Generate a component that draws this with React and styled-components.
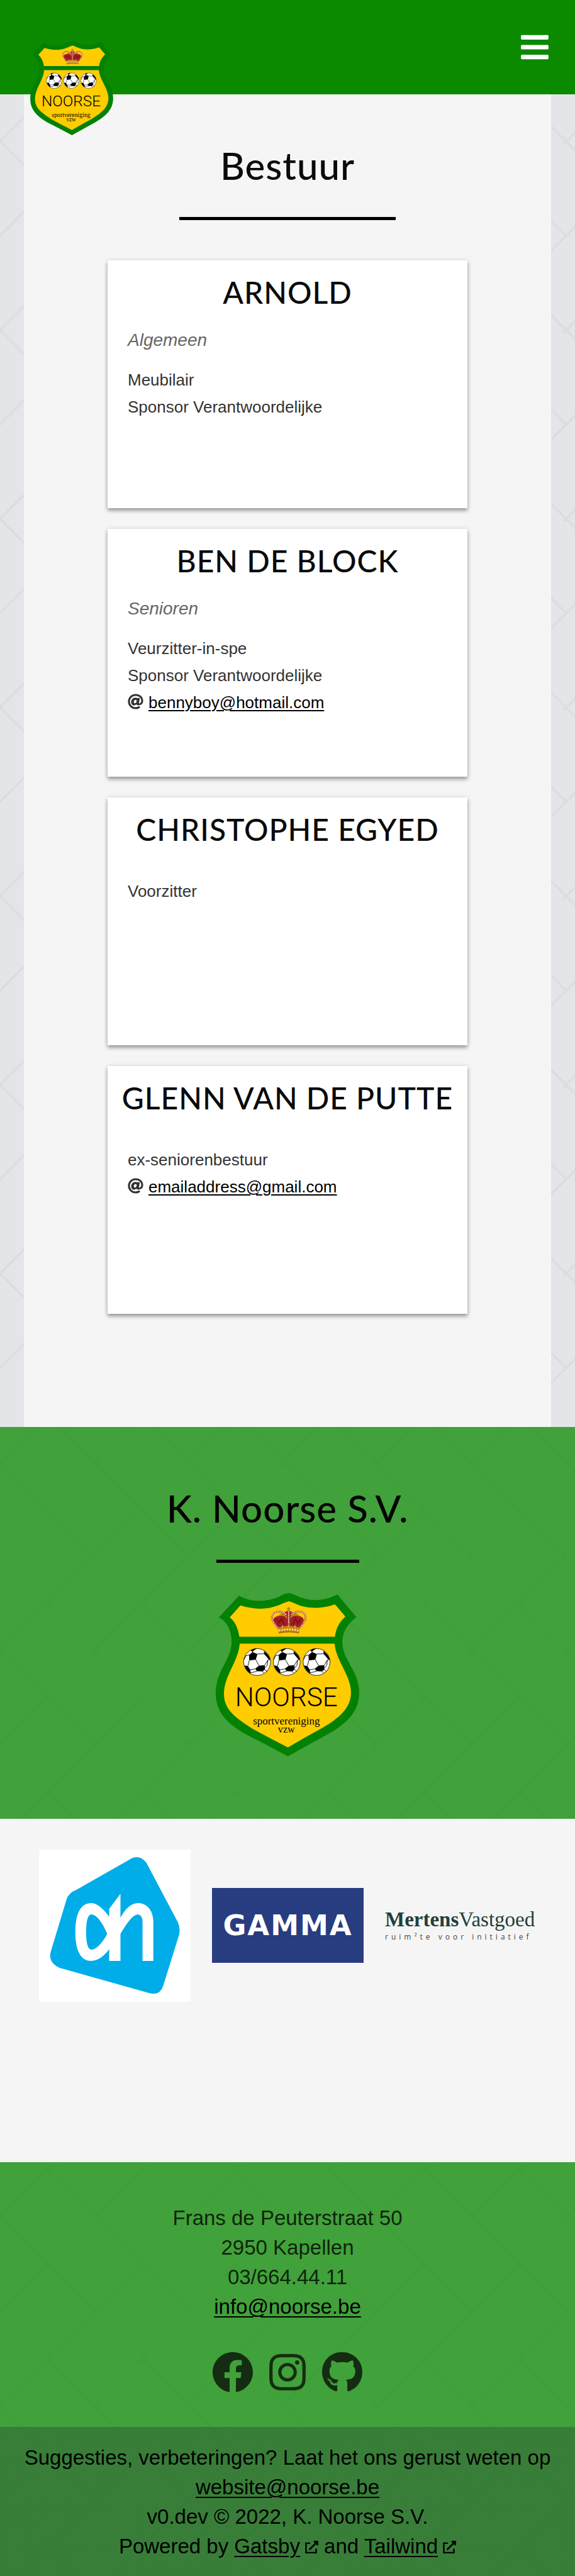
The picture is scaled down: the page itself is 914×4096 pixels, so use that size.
import React from "react";
import styled, { createGlobalStyle } from "styled-components";
import { FaAt, FaBars, FaFacebook, FaGithub, FaInstagram } from "react-icons/fa";

const herringbone =
  "data:image/svg+xml," +
  encodeURIComponent(
    `<svg xmlns="http://www.w3.org/2000/svg" viewBox="0 0 64 128" width="150" height="300"><path d="M-2 -2 L64 64 M32 96 L66 130 M32 32 L-2 66 M66 62 L-2 130 M62 -2 L66 2 M66 -2 L62 2" fill="none" stroke="#dcdde0" stroke-width="1.6"/></svg>`
  );

const GlobalStyle = createGlobalStyle`
  *, *::before, *::after { box-sizing: border-box; }
  body {
    margin: 0;
    background: #e4e5e8 url("${herringbone}") 0 225px / 150px 300px;
    color: rgba(0, 0, 0, 0.8);
    font-family: "Liberation Sans", Arial, sans-serif;
    font-size: 33px;
    line-height: 47px;
  }
  h1, h2, p, ul { margin: 0; padding: 0; font-weight: inherit; }
  a { color: #000; text-underline-offset: 4px; text-decoration-thickness: 2px; }
`;

const Header = styled.header`
  position: relative;
  display: flex;
  align-items: center;
  justify-content: flex-end;
  height: 150px;
  padding: 0 39px;
  background: #0b8a00;
`;

const HomeLink = styled.a`
  position: absolute;
  top: 65px;
  left: 48px;
  z-index: 1;
  line-height: 0;
`;

const MenuButton = styled.button`
  padding: 0;
  border: 0;
  background: none;
  color: #fff;
  font-size: 50px;
  line-height: 0;
  cursor: pointer;
`;

const Main = styled.main`
  display: flex;
  flex-direction: column;
  align-items: center;
  margin: 0 38px;
  padding: 77px 0 180px;
  background: #f5f5f5;
`;

const PageTitle = styled.h1`
  color: ${(p) => (p.$solid ? "#000" : "#0a0a0a")};
  font: 500 60px/72px "Lato Medium", Lato, sans-serif;
  letter-spacing: 1px;
  text-align: center;
`;

const Rule = styled.div`
  width: ${(p) => p.$width};
  height: 5px;
  margin-top: 46px;
  background: #000;
`;

const CardList = styled.div`
  display: grid;
  gap: 33px;
  width: 100%;
  margin-top: 64px;
  padding: 0 133px;
`;

const Card = styled.article`
  min-height: 394px;
  padding: 23px 0 32px;
  background: #fff;
  box-shadow: 0 4px 6px rgba(0, 0, 0, 0.35), 0 0 8px rgba(0, 0, 0, 0.1);
`;

const CardTitle = styled.h2`
  color: #0a0a0a;
  font: 500 48px/56px "Lato Medium", Lato, sans-serif;
  letter-spacing: 1px;
  text-align: center;
  text-transform: uppercase;
`;

const Division = styled.p`
  padding: 0 32px;
  color: #666;
  font-size: 28px;
  font-style: italic;
  line-height: 41px;
`;

const CardBody = styled.div`
  padding-top: 27px;
`;

const Roles = styled.ul`
  padding: 22px 32px 0;
  color: #333;
  font-size: 26px;
  line-height: 43px;
  list-style: none;

  a { text-underline-offset: 3px; }
  svg { width: 25px; height: 25px; margin-right: 8px; vertical-align: -2px; }
`;

const ClubBanner = styled.section`
  display: flex;
  flex-direction: column;
  align-items: center;
  padding: 93px 0 99px;
  background: rgba(11, 138, 0, 0.75);

  > svg { margin-top: 48px; }
`;

const Sponsors = styled.section`
  display: grid;
  grid-template-columns: repeat(3, minmax(0, 1fr));
  align-items: center;
  gap: 34px;
  padding: 49px 61px 255px 62px;
  background: #f5f5f5;

  a { display: block; line-height: 0; text-decoration: none; }
`;

const GammaLogo = styled.span`
  display: flex;
  align-items: center;
  justify-content: center;
  height: 119px;
  background: #283c80;
  color: #fff;
  font: 700 45px/1 "DejaVu Sans", sans-serif;
  letter-spacing: 2px;
`;

const MertensLogo = styled.span`
  display: block;
  color: #243f38;
  white-space: nowrap;
  font: 33px/36px "Liberation Serif", serif;

  small {
    display: block;
    color: #444;
    font: 12px/20px "Open Sans", sans-serif;
    letter-spacing: 5px;
  }
`;

const Contact = styled.address`
  display: flex;
  flex-direction: column;
  align-items: center;
  padding: 65px 16px 54px;
  background: rgba(11, 138, 0, 0.75);
  font-style: normal;
  text-align: center;
`;

const Socials = styled.nav`
  display: flex;
  gap: 21px;
  margin-top: 48px;

  a { color: #142d12; font-size: 66px; line-height: 0; }
`;

const Colophon = styled.div`
  padding: 25px 16px 24px;
  background:
    linear-gradient(rgba(35, 45, 51, 0.3), rgba(35, 45, 51, 0.3)),
    linear-gradient(rgba(11, 138, 0, 0.75), rgba(11, 138, 0, 0.75));
  color: #000;
  text-align: center;
`;

const ExternalSvg = styled.svg`
  width: 21px;
  height: 20px;
  margin-left: 8px;
`;

function ExternalIcon() {
  return (
    <ExternalSvg viewBox="0 0 80 77" aria-hidden="true">
      <path d="M30 15H5V73H67V48" fill="none" stroke="#000" strokeWidth="9" />
      <path d="M25 55L66 14" stroke="#000" strokeWidth="10" />
      <path d="M50 0H80V30L68 24L56 12Z" fill="#000" />
    </ExternalSvg>
  );
}

function Ball({ x }) {
  return (
    <g transform={`translate(${x} 489)`}>
      <circle r="82" fill="#fff" />
      <path d="M-28-61L2-49L-8-14L-48-9L-49-43Z M12 22L47 19L48 46L32 58L0 56L-12 42Z M42-68Q78-40 81-10L70-17L56-34L42-50Z M-77 20L-56 25L-42 46L-38 72Q-68 54-77 20Z M-38-70Q-25-82 2-82L-14-75L-30-62Z M42 70Q66 54 75 35L60 58Z" fill="#000" />
      <path d="M-49-43L-68-38M-68-38L-80-14M2-49L42-50M-8-14L12 22M-48-9L-56 25M47 19L66-12M66-12L75-14M-12 42L-42 48M0 56L-38 66M32 58L42 66M48 46L60 58M-28-61L-20-77M66-12L62 20L48 36" fill="none" stroke="#000" strokeWidth="3.5" />
      <circle r="82" fill="none" stroke="#000" strokeWidth="3" />
    </g>
  );
}

function Crown() {
  return (
    <g>
      <path d="M500 205Q530 180 562 184Q600 180 628 205L600 215H525Z" fill="#c28a1c" />
      <path d="M470 226Q484 206 512 207Q545 204 556 230V270L498 285Q468 250 470 226Z M654 226Q640 206 612 207Q580 204 569 230V270L628 285Q656 250 654 226Z" fill="#a31c26" />
      <path d="M485 225L505 250L520 222L535 262M640 225L618 252L604 222L588 262" fill="none" stroke="#6d1018" strokeWidth="6" />
      <path d="M541 182Q562 172 583 182L574 215V270H552V215Z" fill="#b3202c" />
      <path d="M499 284Q455 236 460 208Q474 176 510 181Q540 190 550 204M627 284Q672 236 666 208Q652 176 616 181Q586 190 576 204" fill="none" stroke="#a4241f" strokeWidth="10" />
      <path d="M499 284Q455 236 460 208Q474 176 510 181Q540 190 550 204M627 284Q672 236 666 208Q652 176 616 181Q586 190 576 204M563 182V275" fill="none" stroke="#eadcb5" strokeWidth="8" strokeLinecap="round" strokeDasharray="1 10" />
      <path d="M557 154H568V162H574V170H568V180H557V170H551V162H557Z" fill="#b3862c" />
      <path d="M497 278Q563 262 630 278L626 314Q563 300 502 316Z" fill="#c98a17" />
      <path d="M512 282L525 262L538 280M549 278L563 258L577 278M588 280L602 262L614 282" fill="#d99c1c" stroke="#8f5a0e" strokeWidth="3" />
      <path d="M506 297Q563 284 620 297" fill="none" stroke="#fff1c4" strokeWidth="9" strokeLinecap="round" strokeDasharray="1 15" />
      <path d="M502 312Q563 298 626 312" fill="none" stroke="#8f5a0e" strokeWidth="4" />
    </g>
  );
}

function Crest({ width, height }) {
  return (
    <svg viewBox="118 69 875 996" width={width} height={height} role="img" aria-label="K. Noorse S.V.">
      <path d="M260 84C330 127 420 122 485 98C525 80 545 69 562 69C585 69 605 85 640 97C710 120 785 115 860 77L975 215C905 270 880 330 894 405C910 490 993 560 993 675C993 790 920 860 810 925Q700 985 558 1065Q420 990 300 930C180 860 118 790 118 680C118 550 200 490 214 385C220 300 185 240 137 217Z" fill="#028102" />
      <path d="M268 144C350 170 430 170 495 145C540 127 555 119 565 119C585 122 610 140 650 150C710 165 780 160 845 137L909 212Q853 260 845 335H262Q248 250 203 217Z" fill="#fc0" />
      <path d="M264 377H843C850 480 943 570 943 675C943 770 870 830 770 890Q660 950 558 1010Q440 950 340 895C240 830 168 780 168 685C168 570 255 490 264 377Z" fill="#fc0" />
      <Crown />
      <Ball x={370} />
      <Ball x={551} />
      <Ball x={733} />
      <text x="549" y="757" textAnchor="middle" fontFamily="Roboto, sans-serif" fontWeight="300" fontSize="162" fill="#000">NOORSE</text>
      <text x="549" y="870" textAnchor="middle" fontFamily="Liberation Serif, serif" fontSize="65" fill="#000">sportvereniging</text>
      <text x="549" y="920" textAnchor="middle" fontFamily="Liberation Serif, serif" fontSize="62" fill="#000">vzw</text>
    </svg>
  );
}

function HeijnLogo() {
  return (
    <svg viewBox="0 0 309 310" width="100%" role="img" aria-label="Albert Heijn">
      <rect width="309" height="310" fill="#fff" />
      <path d="M183 21Q204 7 219 27L283 148Q288 158 286 172L253 278Q246 299 223 292L42 241Q18 230 24 208L56 102Q60 88 76 82Z" fill="#00ade8" />
      <path fillRule="evenodd" d="M143 137C130 119 118 109 106 109C85 109 74 130 74 168C74 206 85 227 106 227C120 227 133 217 143 203V227H166V172C176 155 190 132 202 132Q211 134 211 148V227H233V148C233 122 218 109 202 109C188 109 176 120 166 139V90L143 121ZM139 172C130 150 118 132 106 132Q96 134 96 168Q96 202 106 204C118 204 130 188 139 172Z" fill="#fff" />
    </svg>
  );
}

const members = [
  { name: "Arnold", division: "Algemeen", roles: ["Meubilair", "Sponsor Verantwoordelijke"] },
  { name: "Ben De Block", division: "Senioren", roles: ["Veurzitter-in-spe", "Sponsor Verantwoordelijke"], email: "bennyboy@hotmail.com" },
  { name: "Christophe Egyed", roles: ["Voorzitter"] },
  { name: "Glenn Van de Putte", roles: ["ex-seniorenbestuur"], email: "emailaddress@gmail.com" },
];

export default function App() {
  return (
    <>
      <GlobalStyle />
      <Header>
        <HomeLink href="#home"><Crest width={132} height={150} /></HomeLink>
        <MenuButton type="button" aria-label="Menu"><FaBars /></MenuButton>
      </Header>
      <Main>
        <PageTitle>Bestuur</PageTitle>
        <Rule $width="41%" />
        <CardList>
          {members.map((m) => (
            <Card key={m.name}>
              <CardTitle>{m.name}</CardTitle>
              <CardBody>
                {m.division && <Division>{m.division}</Division>}
                <Roles>
                  {m.roles.map((r) => <li key={r}>{r}</li>)}
                  {m.email && <li><FaAt /><a href={`mailto:${m.email}`}>{m.email}</a></li>}
                </Roles>
              </CardBody>
            </Card>
          ))}
        </CardList>
      </Main>
      <ClubBanner>
        <PageTitle as="h2" $solid>K. Noorse S.V.</PageTitle>
        <Rule $width="227px" />
        <Crest width={228} height={260} />
      </ClubBanner>
      <Sponsors>
        <a href="#albert-heijn"><HeijnLogo /></a>
        <a href="#gamma"><GammaLogo>GAMMA</GammaLogo></a>
        <a href="#mertens">
          <MertensLogo><b>Mertens</b>Vastgoed<small>ruim²te voor initiatief</small></MertensLogo>
        </a>
      </Sponsors>
      <footer>
        <Contact>
          <span>Frans de Peuterstraat 50</span>
          <span>2950 Kapellen</span>
          <span>03/664.44.11</span>
          <a href="mailto:info@noorse.be">info@noorse.be</a>
          <Socials aria-label="Sociale media">
            <a href="#facebook" aria-label="Facebook"><FaFacebook /></a>
            <a href="#instagram" aria-label="Instagram"><FaInstagram /></a>
            <a href="#github" aria-label="GitHub"><FaGithub /></a>
          </Socials>
        </Contact>
        <Colophon>
          <p>Suggesties, verbeteringen? Laat het ons gerust weten op <a href="mailto:website@noorse.be">website@noorse.be</a></p>
          <p>v0.dev © 2022, K. Noorse S.V.</p>
          <p>
            Powered by <a href="#gatsby">Gatsby</a><ExternalIcon /> and <a href="#tailwind">Tailwind</a><ExternalIcon />
          </p>
        </Colophon>
      </footer>
    </>
  );
}
